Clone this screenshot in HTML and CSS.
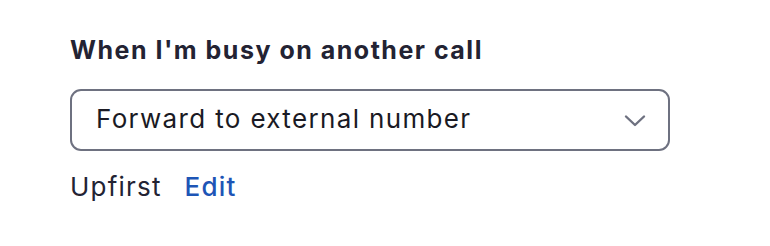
FILE: index.html
```html
<!DOCTYPE html>
<html lang="en">
<head>
<meta charset="utf-8">
<title>Busy setting</title>
<link rel="stylesheet" href="styles.css">
</head>
<body>
<div class="setting">
  <div class="setting-label">When I'm busy on another call</div>
  <div class="select" role="combobox" aria-expanded="false">
    <span class="select-value">Forward to external number</span>
    <svg class="select-chevron" width="22" height="14" viewBox="0 0 22 14" aria-hidden="true">
      <polyline points="2,2.5 11,11 20,2.5" fill="none" stroke="#6e7180" stroke-width="2.4" stroke-linecap="round" stroke-linejoin="round"/>
    </svg>
  </div>
  <div class="setting-detail">
    <span class="detail-name">Upfirst</span>
    <a class="detail-link" href="#">Edit</a>
  </div>
</div>
</body>
</html>
```

FILE: styles.css
```css
html, body {
  margin: 0;
  padding: 0;
  background: #ffffff;
}

body {
  font-family: Inter, "Noto Sans", "Liberation Sans", sans-serif;
  color: #232333;
}

.setting {
  display: flex;
  flex-direction: column;
  align-items: flex-start;
  padding: 34px 0 0 70px;
}

.setting-label {
  font-size: 25px;
  font-weight: 700;
  line-height: 32px;
  letter-spacing: 1.5px;
  color: #232333;
}

.select {
  box-sizing: border-box;
  margin-top: 23px;
  width: 600px;
  height: 62px;
  border: 2px solid #6e7180;
  border-radius: 11px;
  display: flex;
  align-items: center;
  justify-content: space-between;
  padding: 0 22px 3px 24px;
}

.select-value {
  font-size: 26px;
  line-height: 32px;
  letter-spacing: 1.35px;
  color: #1a1a24;
}

.select-chevron {
  display: block;
  margin-top: 5px;
}

.setting-detail {
  margin-top: 20px;
  display: flex;
  align-items: baseline;
  gap: 23px;
  font-size: 26px;
  line-height: 32px;
  letter-spacing: 1.2px;
}

.detail-name {
  color: #232333;
}

.detail-link {
  color: #1d55b6;
  text-decoration: none;
  font-weight: 500;
}
```
